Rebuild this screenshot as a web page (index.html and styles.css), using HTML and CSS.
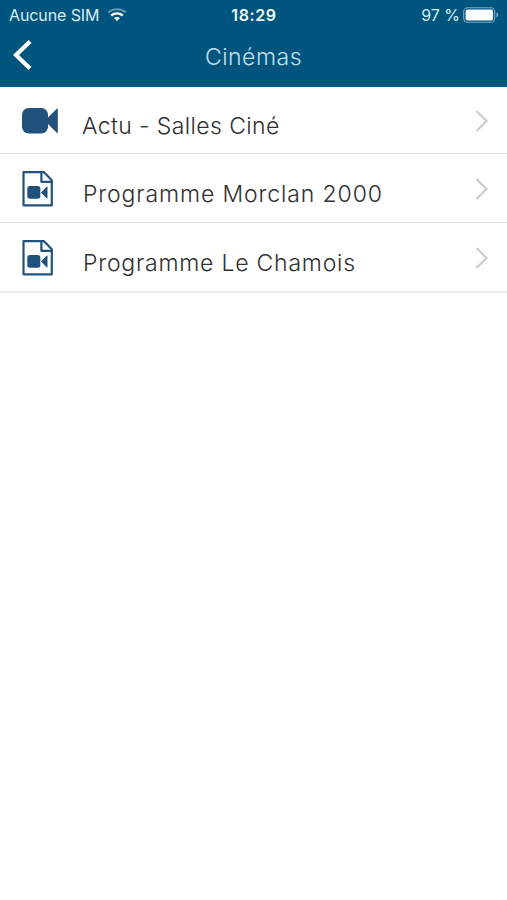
FILE: index.html
```
<!DOCTYPE html>
<html lang="fr">
  <head>
    <meta charset="UTF-8" />
    <meta name="viewport" content="width=device-width, initial-scale=1.0"/>
    <title>Cinémas</title>
    <link rel="stylesheet" href="styles.css">
  </head>

  <body>
    <header>
      <div class="status-bar">
        <div class="status-left">
          <span class="carrier">Aucune SIM</span>
          <svg class="wifi" width="20" height="14" viewBox="0 0 20 14" fill="none" stroke="#fff">
            <path d="M1.2 4.6C6 .2 14 .2 18.8 4.6" stroke-width="2" opacity=".4"/>
            <path d="M4.2 7.5C7.6 4.6 12.4 4.6 15.8 7.5" stroke-width="2.4"/>
            <path d="M7 9.9Q10 7.9 13 9.9L10 13z" fill="#fff" stroke="none"/>
          </svg>
        </div>
        <span class="clock">18:29</span>
        <div class="status-right">
          <span class="percent">97 %</span>
          <svg class="battery" width="36" height="16" viewBox="0 0 36 16">
            <rect x=".7" y=".7" width="31" height="14.6" rx="4" fill="none" stroke="#fff" stroke-width="1.1" opacity=".5"/>
            <rect x="2.6" y="2.6" width="27.4" height="10.8" rx="2" fill="#fff"/>
            <path d="M33.3 5.5Q35.3 6.4 35.3 8T33.3 10.5z" fill="#fff" opacity=".5"/>
          </svg>
        </div>
      </div>
      <div class="nav-bar">
        <svg class="back" width="20" height="32" viewBox="0 0 20 32">
          <path d="M18 2.5L4 16L18 29.5" fill="none" stroke="#fff" stroke-width="4.2"/>
        </svg>
        <h1>Cinémas</h1>
      </div>
    </header>

    <ul class="menu">
      <li class="item">
        <svg class="icon" width="37" height="36" viewBox="0 0 37 36" fill="#20527d">
          <rect x="0" y="5" width="26" height="25.5" rx="6.5"/>
          <path d="M25 15.5L34.8 5.7Q35.8 5 35.8 6.3V29.2Q35.8 30.5 34.8 29.8L25 20z"/>
        </svg>
        <span class="label label-actu">Actu - Salles Ciné</span>
        <svg class="chevron" width="14" height="24" viewBox="0 0 14 24">
          <path d="M1.5 2L11.5 12L1.5 22" fill="none" stroke="#cdcdcf" stroke-width="2.2"/>
        </svg>
      </li>
      <li class="item">
        <svg class="icon" width="37" height="36" viewBox="0 0 37 36" fill="#20527d">
          <path d="M1.5 1.2H22L29.8 9.2V34.3H1.5z M19.4 1.2V10.8H29.8" fill="none" stroke="#20527d" stroke-width="2.2" stroke-linejoin="round"/>
          <rect x="5.3" y="15" width="13" height="12.8" rx="2.5"/>
          <path d="M19 21.4L24.6 15.8Q25.5 15 25.5 16.2V26.8Q25.5 28 24.6 27.2z"/>
        </svg>
        <span class="label label-morclan">Programme Morclan 2000</span>
        <svg class="chevron" width="14" height="24" viewBox="0 0 14 24">
          <path d="M1.5 2L11.5 12L1.5 22" fill="none" stroke="#cdcdcf" stroke-width="2.2"/>
        </svg>
      </li>
      <li class="item">
        <svg class="icon" width="37" height="36" viewBox="0 0 37 36" fill="#20527d">
          <path d="M1.5 1.2H22L29.8 9.2V34.3H1.5z M19.4 1.2V10.8H29.8" fill="none" stroke="#20527d" stroke-width="2.2" stroke-linejoin="round"/>
          <rect x="5.3" y="15" width="13" height="12.8" rx="2.5"/>
          <path d="M19 21.4L24.6 15.8Q25.5 15 25.5 16.2V26.8Q25.5 28 24.6 27.2z"/>
        </svg>
        <span class="label label-chamois">Programme Le Chamois</span>
        <svg class="chevron" width="14" height="24" viewBox="0 0 14 24">
          <path d="M1.5 2L11.5 12L1.5 22" fill="none" stroke="#cdcdcf" stroke-width="2.2"/>
        </svg>
      </li>
    </ul>
  </body>
</html>
```
FILE: styles.css
```
body {
  margin: 0;
  font-family: Inter, sans-serif;
  background-color: #fff;
  color: #303030;
}

header {
  height: 87px;
  background-color: #00557f;
  color: #fff;
}

.status-bar {
  display: grid;
  grid-template-columns: 1fr auto 1fr;
  align-items: center;
  height: 30px;
  padding: 0 8px 0 9px;
  font-size: 16px;
  line-height: 30px;
  color: #d9edf8;
}

.status-left,
.status-right {
  display: flex;
  align-items: center;
}

.status-left {
  gap: 8px;
}

.carrier {
  letter-spacing: -0.1px;
}

.status-right {
  justify-content: flex-end;
  gap: 3px;
}

.clock {
  font-weight: 600;
  letter-spacing: 0.6px;
  color: #f0f8fc;
}

.nav-bar {
  display: grid;
  grid-template-columns: 40px 1fr 40px;
  align-items: center;
  height: 50px;
}

.back {
  margin-left: 12px;
}

h1 {
  margin: 0;
  padding-top: 3px;
  font-size: 23px;
  font-weight: 300;
  line-height: 30px;
  letter-spacing: 0.5px;
  text-align: center;
  color: #c3dfed;
}

.menu {
  margin: 0;
  padding: 0;
  list-style: none;
  border-bottom: 2px solid #eeeeee;
}

.item {
  display: flex;
  align-items: center;
  box-sizing: border-box;
  height: 69px;
  padding: 1px 18px 0 22px;
  border-bottom: 1px solid #dedede;
}

.item:first-child {
  height: 67px;
}

.item:last-child {
  height: 68px;
  border-bottom: none;
}

.label {
  flex: 1;
  padding: 11px 0 0 24px;
  font-size: 23px;
  font-weight: 300;
  line-height: 30px;
  white-space: nowrap;
}

.label-actu {
  padding-left: 23px;
  letter-spacing: 0.4px;
}

.label-morclan {
  letter-spacing: 0.88px;
}

.label-chamois {
  letter-spacing: 0.78px;
}
```
